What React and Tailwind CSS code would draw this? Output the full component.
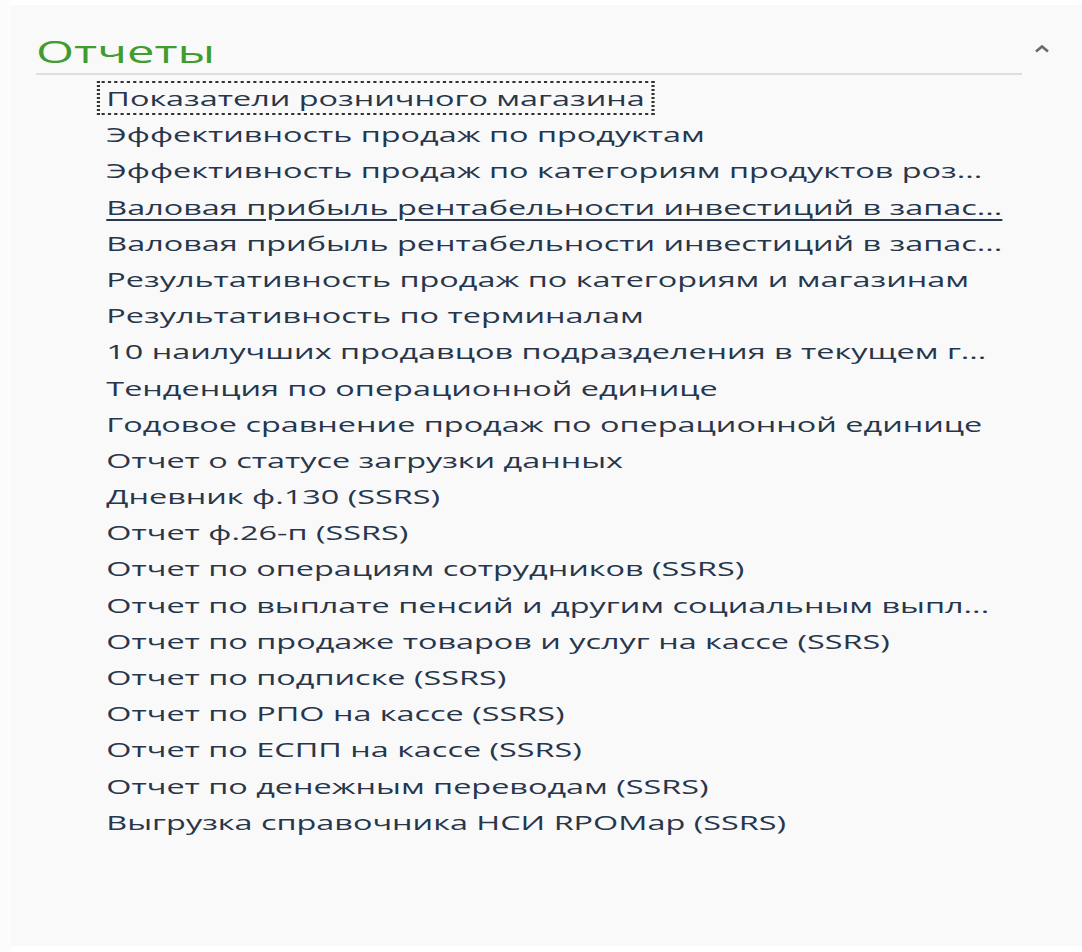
import { useState } from 'react'

const reports = [
  'Показатели розничного магазина',
  'Эффективность продаж по продуктам',
  'Эффективность продаж по категориям продуктов роз...',
  'Валовая прибыль рентабельности инвестиций в запас...',
  'Валовая прибыль рентабельности инвестиций в запас...',
  'Результативность продаж по категориям и магазинам',
  'Результативность по терминалам',
  '10 наилучших продавцов подразделения в текущем г...',
  'Тенденция по операционной единице',
  'Годовое сравнение продаж по операционной единице',
  'Отчет о статусе загрузки данных',
  'Дневник ф.130 (SSRS)',
  'Отчет ф.26-п (SSRS)',
  'Отчет по операциям сотрудников (SSRS)',
  'Отчет по выплате пенсий и другим социальным выпл...',
  'Отчет по продаже товаров и услуг на кассе (SSRS)',
  'Отчет по подписке (SSRS)',
  'Отчет по РПО на кассе (SSRS)',
  'Отчет по ЕСПП на кассе (SSRS)',
  'Отчет по денежным переводам (SSRS)',
  'Выгрузка справочника НСИ RPOMap (SSRS)',
]

export default function App() {
  const [open, setOpen] = useState(true)

  return (
    <div className="flex h-[952px] w-[1082px] overflow-hidden bg-white font-['Open_Sans',sans-serif]">
      {/* left decorative strip */}
      <div className="w-[11px] shrink-0 bg-[#fcfcfc]" />

      <div className="mt-[5px] mb-[6px] flex-1 bg-[#f9f9fa]">
        {/* header */}
        <div className="ml-[25px] mr-[60px] flex items-end justify-between border-b-2 border-[#dedede] pb-[2px] pt-[26px]">
          <h2 className="origin-left scale-x-[1.58] text-[31px] leading-[40px] text-[#3f9c2e]">Отчеты</h2>
          <button
            onClick={() => setOpen(!open)}
            className="mb-[18px] mr-[-28px] text-[#6a6a6a]"
            aria-label="Свернуть"
          >
            <svg width="16" height="9" viewBox="0 0 16 9">
              <path d="M2 7.5 L8 2.5 L14 7.5" fill="none" stroke="currentColor" strokeWidth="2.6" />
            </svg>
          </button>
        </div>

        {open && (
          <ul className="ml-[89px] mt-[8px] flex w-fit origin-left scale-x-[1.58] flex-col">
            {reports.map((name, i) => (
              <li key={i} className="h-[36.2px]">
                <a
                  href="#"
                  className={`inline-block px-[4px] text-[20.5px] leading-[30px] text-[#27364a] ${
                    i === 0 ? 'outline-dotted outline-[2px] outline-[#333]' : ''
                  } ${i === 3 ? 'underline decoration-[1.5px] underline-offset-[4px]' : ''}`}
                >
                  {name}
                </a>
              </li>
            ))}
          </ul>
        )}
      </div>
    </div>
  )
}
